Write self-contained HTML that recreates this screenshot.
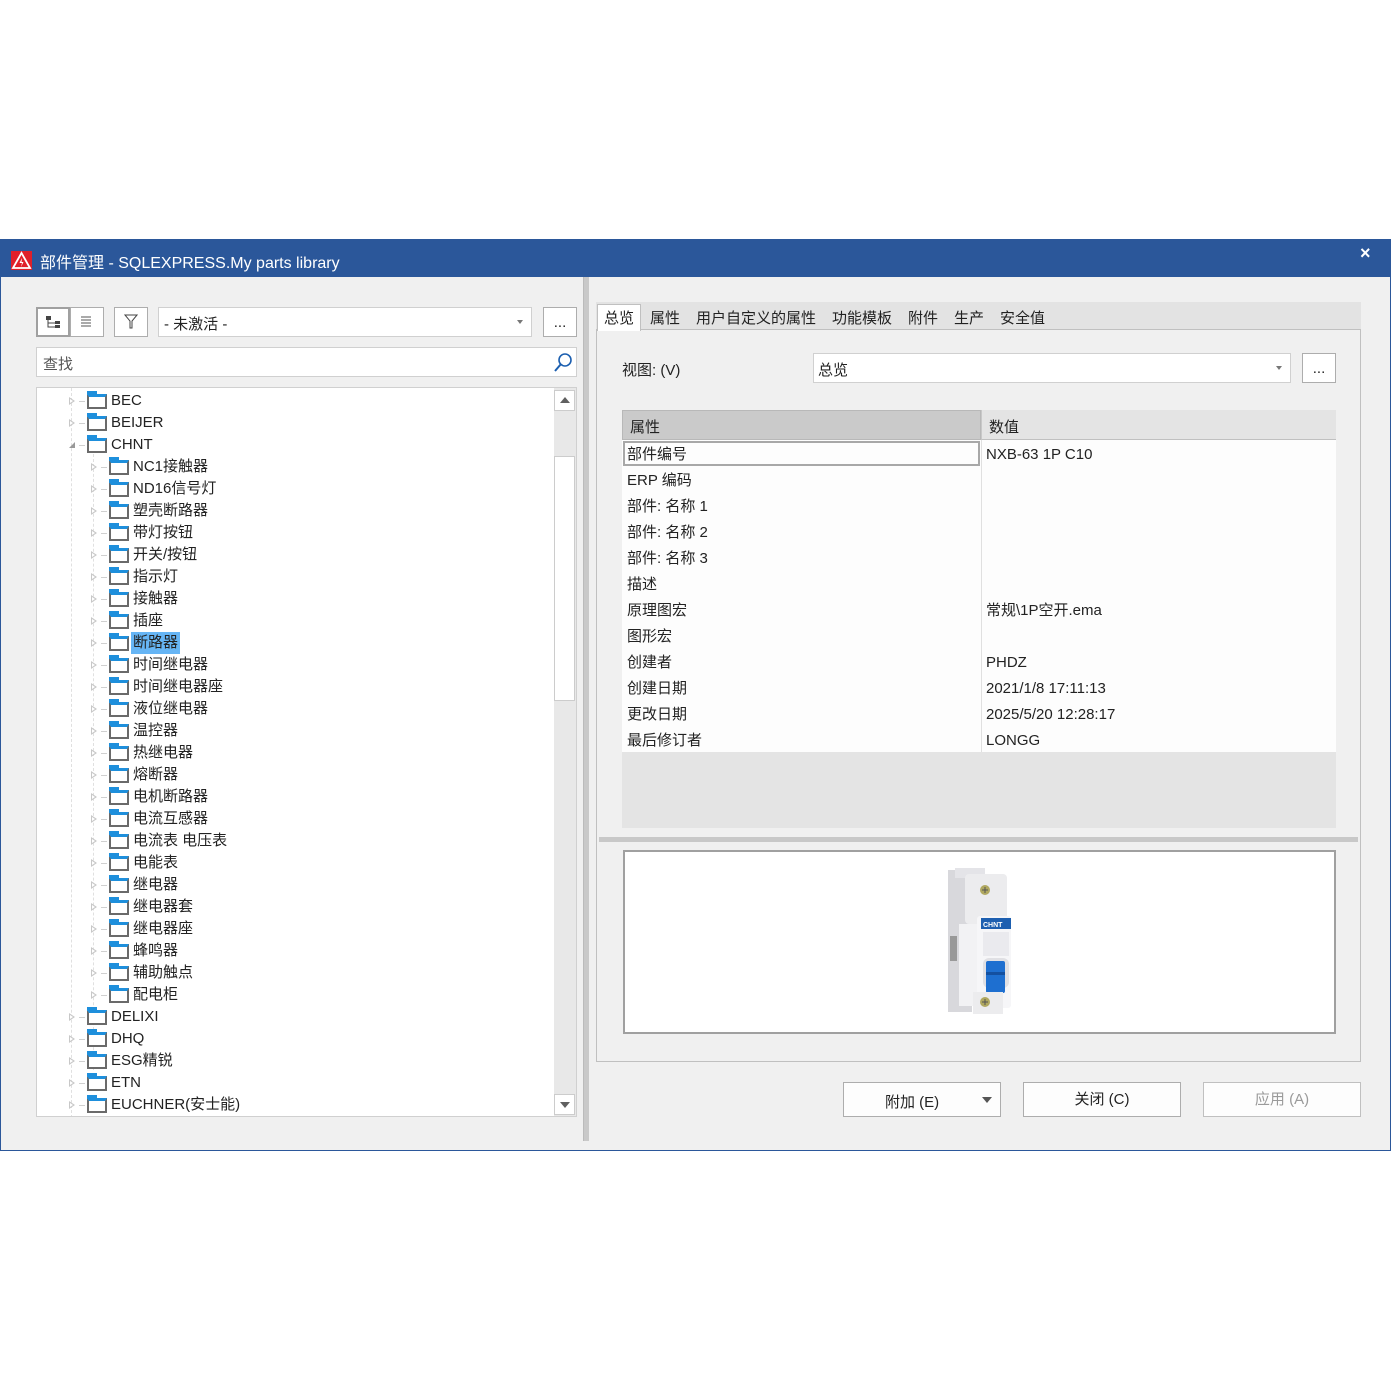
<!DOCTYPE html>
<html><head><meta charset="utf-8">
<style>
*{margin:0;padding:0;box-sizing:border-box}
body{width:1391px;height:1391px;background:#fff;position:relative;overflow:hidden;font-family:"Liberation Sans","Noto Sans CJK SC",sans-serif;font-size:15px;color:#222}
.a{position:absolute}
.win{left:0;top:239px;width:1391px;height:912px;border:1px solid #2b579a;background:#f0f0f0}
.title{left:0;top:239px;width:1391px;height:38px;background:#2b579a;color:#fff;font-size:16px}
.btn{background:#fdfdfd;border:1px solid #adadad}
.row{position:absolute;height:22px;line-height:22px;white-space:nowrap}
.exp{position:absolute;width:0;height:0;border-left:6px solid #c8c8c8;border-top:4px solid transparent;border-bottom:4px solid transparent;top:7px}
.exp:after{content:"";position:absolute;left:-5px;top:-2px;border-left:3px solid #fff;border-top:2px solid transparent;border-bottom:2px solid transparent}
.dash{position:absolute;top:11px;width:6px;border-top:1px solid #d0d0d0}
.fold{position:absolute;top:4px;width:20px;height:15px;border:2px solid #6a6a6a;border-top:3px solid #1e8fdc;background:#fff}
.fold:before{content:"";position:absolute;left:-2px;top:-6px;width:10px;height:4px;background:#1e8fdc}
.txt{position:absolute}
.prow{position:absolute;left:627px;height:26px;line-height:26px;margin-top:2px}
.pval{position:absolute;left:986px;height:26px;line-height:26px;margin-top:2px}
</style></head><body>
<div class="a win"></div>
<div class="a title">
 <svg class="a" style="left:11px;top:12px" width="21" height="19" viewBox="0 0 21 19"><rect width="21" height="19" fill="#e0202a"/><path d="M10.5 2 L19 17 L2 17 Z" fill="none" stroke="#fff" stroke-width="1.8"/><path d="M11 7 L8.5 12 L11 12 L10 16 L12.5 11 L10.5 11 Z" fill="#fff"/></svg>
 <div class="a" style="left:40px;top:10px">部件管理 - SQLEXPRESS.My parts library</div>
 <div class="a" style="left:1360px;top:4px;font-size:18px;font-weight:bold">×</div>
</div>
<div class="a" style="left:583px;top:277px;width:6px;height:864px;background:#c9c9c9;border-left:1px solid #bbb"></div>

<div class="a btn" style="left:36px;top:307px;width:34px;height:30px;border:2px solid #a0a0a0;background:#fff"></div>
<svg class="a" style="left:45px;top:315px" width="16" height="14"><rect x="1" y="1" width="5" height="4" fill="#444"/><path d="M3 5 V12 H10 M3 8 H10" stroke="#444" fill="none"/><rect x="10" y="6" width="5" height="3" fill="#444"/><rect x="10" y="10" width="5" height="3" fill="#444"/></svg>
<div class="a btn" style="left:70px;top:307px;width:34px;height:30px;background:#fff"></div>
<svg class="a" style="left:80px;top:315px" width="12" height="12"><path d="M1 2H11M1 5H11M1 8H11M1 11H11" stroke="#555"/></svg>
<div class="a btn" style="left:114px;top:307px;width:34px;height:30px;background:#fff"></div>
<svg class="a" style="left:124px;top:314px" width="14" height="15"><path d="M1 1H13L8 7V14H6V7Z" fill="none" stroke="#444"/></svg>
<div class="a btn" style="left:158px;top:307px;width:374px;height:30px;border-color:#d0d0d0;background:#fff"></div>
<div class="a" style="left:164px;top:313px">- 未激活 -</div>
<div class="a" style="left:517px;top:320px;border-top:4px solid #777;border-left:3px solid transparent;border-right:3px solid transparent"></div>
<div class="a btn" style="left:543px;top:307px;width:34px;height:30px;background:#fff;text-align:center;line-height:30px">...</div>
<div class="a" style="left:36px;top:347px;width:541px;height:30px;border:1px solid #d0d0d0;background:#fff"></div>
<div class="a" style="left:43px;top:353px;color:#555">查找</div>
<svg class="a" style="left:553px;top:352px" width="20" height="21"><circle cx="12" cy="8" r="6" fill="none" stroke="#1c5fb0" stroke-width="1.6"/><path d="M8 12 L2 19" stroke="#1c5fb0" stroke-width="2"/></svg>

<div class="a" style="left:36px;top:387px;width:541px;height:730px;border:1px solid #d0d0d0;background:#fff;overflow:hidden">
 <div class="a" style="left:34px;top:0;height:730px;border-left:1px dashed #e0e0e0"></div>
 <div class="a" style="left:56px;top:66px;height:616px;border-left:1px dashed #e0e0e0"></div>
 <div id="tree"></div>
 <div class="a" style="left:517px;top:0;width:22px;height:728px;background:#e8e8e8"></div>
 <div class="a" style="left:517px;top:2px;width:21px;height:21px;background:#fff;border:1px solid #ccc"></div>
 <div class="a" style="left:523px;top:9px;border-bottom:6px solid #606060;border-left:5px solid transparent;border-right:5px solid transparent"></div>
 <div class="a" style="left:517px;top:68px;width:21px;height:245px;background:#fff;border:1px solid #ccc"></div>
 <div class="a" style="left:517px;top:706px;width:21px;height:21px;background:#fff;border:1px solid #ccc"></div>
 <div class="a" style="left:523px;top:714px;border-top:6px solid #606060;border-left:5px solid transparent;border-right:5px solid transparent"></div>
</div>

<div class="a" style="left:596px;top:302px;width:765px;height:28px;background:#e3e3e3"></div>
<div class="a" style="left:596px;top:329px;width:765px;height:733px;border:1px solid #c0c0c0;background:#f0f0f0"></div>
<div class="a" style="left:597px;top:304px;width:44px;height:27px;background:#fff;border:1px solid #c0c0c0;border-bottom:none"></div>
<div class="a" style="left:604px;top:307px">总览</div>
<div class="a" style="left:650px;top:307px">属性</div>
<div class="a" style="left:696px;top:307px">用户自定义的属性</div>
<div class="a" style="left:832px;top:307px">功能模板</div>
<div class="a" style="left:908px;top:307px">附件</div>
<div class="a" style="left:954px;top:307px">生产</div>
<div class="a" style="left:1000px;top:307px">安全值</div>

<div class="a" style="left:622px;top:359px">视图: (V)</div>
<div class="a" style="left:813px;top:353px;width:478px;height:30px;background:#fff;border:1px solid #d0d0d0"></div>
<div class="a" style="left:818px;top:359px">总览</div>
<div class="a" style="left:1276px;top:366px;border-top:4px solid #777;border-left:3px solid transparent;border-right:3px solid transparent"></div>
<div class="a btn" style="left:1302px;top:353px;width:34px;height:30px;background:#fff;text-align:center;line-height:30px">...</div>

<div class="a" style="left:622px;top:410px;width:714px;height:418px;background:#e4e4e4"></div>
<div class="a" style="left:622px;top:410px;width:359px;height:30px;background:#cacaca;border:1px solid #b8b8b8"></div>
<div class="a" style="left:981px;top:410px;width:355px;height:30px;background:#e4e4e4;border-bottom:1px solid #c0c0c0;border-left:1px solid #c8c8c8"></div>
<div class="a" style="left:630px;top:416px">属性</div>
<div class="a" style="left:989px;top:416px">数值</div>
<div class="a" style="left:622px;top:440px;width:714px;height:312px;background:#fdfdfd"></div>
<div class="a" style="left:981px;top:440px;height:312px;border-left:1px solid #e0e0e0"></div>
<div class="a" style="left:623px;top:441px;width:357px;height:25px;border:2px solid #a8a8a8"></div>
<div class="prow" style="top:440px">部件编号</div><div class="pval" style="top:440px">NXB-63 1P C10</div>
<div class="prow" style="top:466px">ERP 编码</div>
<div class="prow" style="top:492px">部件: 名称 1</div>
<div class="prow" style="top:518px">部件: 名称 2</div>
<div class="prow" style="top:544px">部件: 名称 3</div>
<div class="prow" style="top:570px">描述</div>
<div class="prow" style="top:596px">原理图宏</div><div class="pval" style="top:596px">常规\1P空开.ema</div>
<div class="prow" style="top:622px">图形宏</div>
<div class="prow" style="top:648px">创建者</div><div class="pval" style="top:648px">PHDZ</div>
<div class="prow" style="top:674px">创建日期</div><div class="pval" style="top:674px">2021/1/8 17:11:13</div>
<div class="prow" style="top:700px">更改日期</div><div class="pval" style="top:700px">2025/5/20 12:28:17</div>
<div class="prow" style="top:726px">最后修订者</div><div class="pval" style="top:726px">LONGG</div>

<div class="a" style="left:599px;top:837px;width:759px;height:5px;background:#c8c8c8"></div>
<div class="a" style="left:623px;top:850px;width:713px;height:184px;background:#fff;border:2px solid #a0a0a0"></div>
<svg class="a" style="left:945px;top:866px" width="70" height="152" viewBox="0 0 70 152">
 <rect x="3" y="4" width="24" height="142" fill="#d8d8dc"/>
 <rect x="10" y="2" width="30" height="10" fill="#e4e4e8"/>
 <rect x="20" y="8" width="42" height="50" rx="4" fill="#ececee"/>
 <circle cx="40" cy="24" r="5" fill="#b0a860"/><path d="M37 24H43M40 21V27" stroke="#555"/>
 <rect x="5" y="70" width="7" height="25" fill="#999"/>
 <rect x="14" y="58" width="52" height="82" fill="#f2f2f4"/>
 <rect x="32" y="50" width="34" height="92" rx="3" fill="#f6f6f8"/>
 <rect x="36" y="52" width="30" height="11" fill="#1d5fb0"/>
 <text x="38" y="61" font-size="7" fill="#fff" font-family="Liberation Sans" font-weight="bold">CHNT</text>
 <rect x="38" y="66" width="26" height="24" fill="#eaeaee"/>
 <rect x="38" y="92" width="26" height="30" rx="6" fill="#e0e0e4"/>
 <rect x="41" y="95" width="19" height="32" rx="2" fill="#1e6fd0"/>
 <rect x="41" y="106" width="19" height="3" fill="#1450a0"/>
 <rect x="28" y="126" width="30" height="22" fill="#ececee"/>
 <circle cx="40" cy="136" r="5" fill="#b0a860"/><path d="M37 136H43M40 133V139" stroke="#555"/>
</svg>

<div class="a btn" style="left:843px;top:1082px;width:158px;height:35px"></div>
<div class="a" style="left:885px;top:1091px">附加 (E)</div>
<div class="a" style="left:982px;top:1097px;border-top:6px solid #555;border-left:5px solid transparent;border-right:5px solid transparent"></div>
<div class="a btn" style="left:1023px;top:1082px;width:158px;height:35px;text-align:center;line-height:33px">关闭 (C)</div>
<div class="a btn" style="left:1203px;top:1082px;width:158px;height:35px;text-align:center;line-height:33px;color:#9a9a9a;border-color:#c0c0c0">应用 (A)</div>

<script>
var items=[[0,"BEC",0],[0,"BEIJER",0],[0,"CHNT",1],
[1,"NC1接触器"],[1,"ND16信号灯"],[1,"塑壳断路器"],[1,"带灯按钮"],[1,"开关/按钮"],[1,"指示灯"],[1,"接触器"],[1,"插座"],[1,"断路器",2],[1,"时间继电器"],[1,"时间继电器座"],[1,"液位继电器"],[1,"温控器"],[1,"热继电器"],[1,"熔断器"],[1,"电机断路器"],[1,"电流互感器"],[1,"电流表 电压表"],[1,"电能表"],[1,"继电器"],[1,"继电器套"],[1,"继电器座"],[1,"蜂鸣器"],[1,"辅助触点"],[1,"配电柜"],
[0,"DELIXI"],[0,"DHQ"],[0,"ESG精锐"],[0,"ETN"],[0,"EUCHNER(安士能)"]];
var h="";
items.forEach(function(it,i){
 var top=2+i*22, o=it[0]?22:0;
 h+='<div class="row" style="left:0;top:'+top+'px;width:515px">';
 if(it[2]==1) h+='<div class="a" style="left:'+(32+o)+'px;top:8px;border-bottom:6px solid #999;border-left:6px solid transparent"></div>';
 else h+='<div class="exp" style="left:'+(32+o)+'px"></div>';
 h+='<div class="dash" style="left:'+(42+o)+'px"></div>';
 h+='<div class="fold" style="left:'+(50+o)+'px"></div>';
 var st=it[2]==2?'background:#66b5f5;padding:0 2px;left:'+(72+o)+'px':'left:'+(74+o)+'px';
 h+='<div class="txt" style="'+st+'">'+it[1]+'</div></div>';
});
document.getElementById("tree").innerHTML=h;
</script>
</body></html>
